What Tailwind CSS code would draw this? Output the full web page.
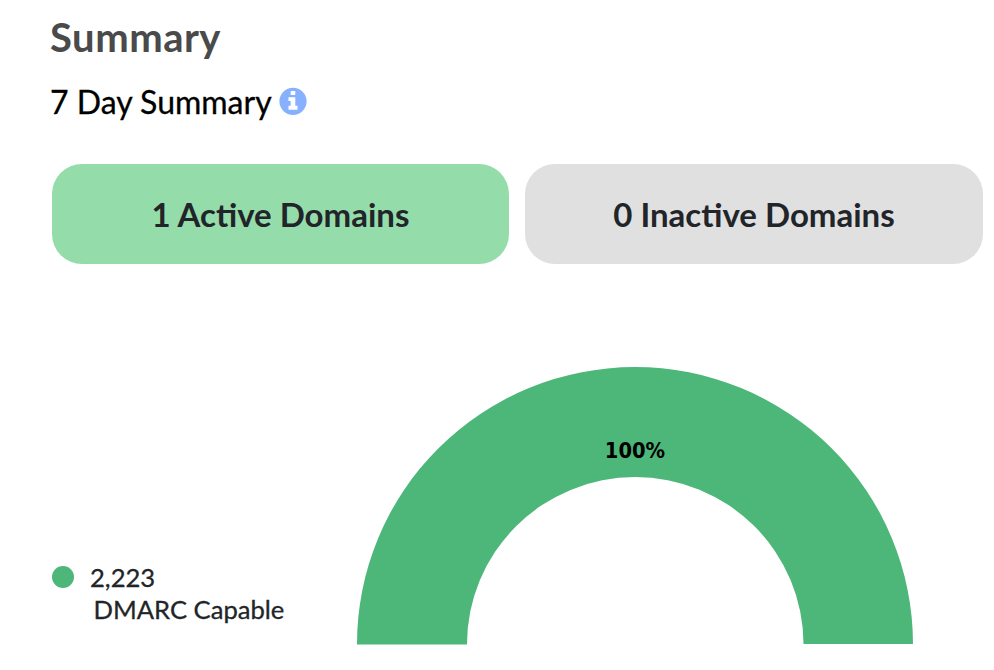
<!DOCTYPE html>
<html lang="en">
<head>
<meta charset="utf-8">
<title>Summary</title>
<script src="https://cdn.jsdelivr.net/npm/@tailwindcss/browser@4"></script>
</head>
<body class="h-[670px] overflow-hidden bg-white pl-[50px] font-['Lato',sans-serif] text-[#212529]">
  <h1 class="pt-[13px] text-[40px] leading-[48px] font-bold tracking-[0.5px] text-[#4a4a4a]">Summary</h1>
  <div class="mt-[20px] flex h-[40px] items-center text-[32px] leading-[40px] text-black">
    <span class="pt-[2px] leading-[40px] [-webkit-text-stroke:0.3px_#000]">7 Day Summary</span>
    <svg class="ml-[7px] size-7" viewBox="0 0 28 28"><circle cx="14" cy="14.3" r="13.6" fill="#87b0ff"/><path d="M11.7 4h4.6v4h-4.6zM9.5 10.3h6.8v8.4h2.2v4h-9v-4h2.2v-4.6H9.5z" fill="#fff"/></svg>
  </div>
  <div class="mt-[43px] ml-[2px] flex gap-4">
    <div class="flex h-[100px] w-[457px] items-center justify-center rounded-[30px] bg-[#95dcab] pt-px text-[33px] font-bold">1 Active Domains</div>
    <div class="flex h-[100px] w-[458px] items-center justify-center rounded-[30px] bg-[#e0e0e0] pt-px text-[33px] font-bold">0 Inactive Domains</div>
  </div>
  <div class="mt-[103px] ml-[2px] flex">
    <div class="w-[305px] pt-[194px]">
      <div class="flex items-center text-[25.6px] leading-[32px] [-webkit-text-stroke:0.3px_#212529]"><span class="mr-4 size-[22px] rounded-full bg-[#4db779]"></span><span class="leading-[32px]">2,223</span></div>
      <div class="pl-[41.5px] text-[25.6px] leading-[32px] [-webkit-text-stroke:0.3px_#212529]">DMARC Capable</div>
    </div>
    <svg class="h-[278px] w-[556px]" viewBox="0 0 556 278"><path d="M0 277.5A278 277.2 0 0 1 556 277H446.5A168.2 167.2 0 0 0 110 277.5Z" fill="#4db779"/><text x="278" y="91" text-anchor="middle" font-family="DejaVu Sans Condensed, DejaVu Sans, sans-serif" font-stretch="condensed" font-size="21.7" font-weight="700">100%</text></svg>
  </div>
</body>
</html>
